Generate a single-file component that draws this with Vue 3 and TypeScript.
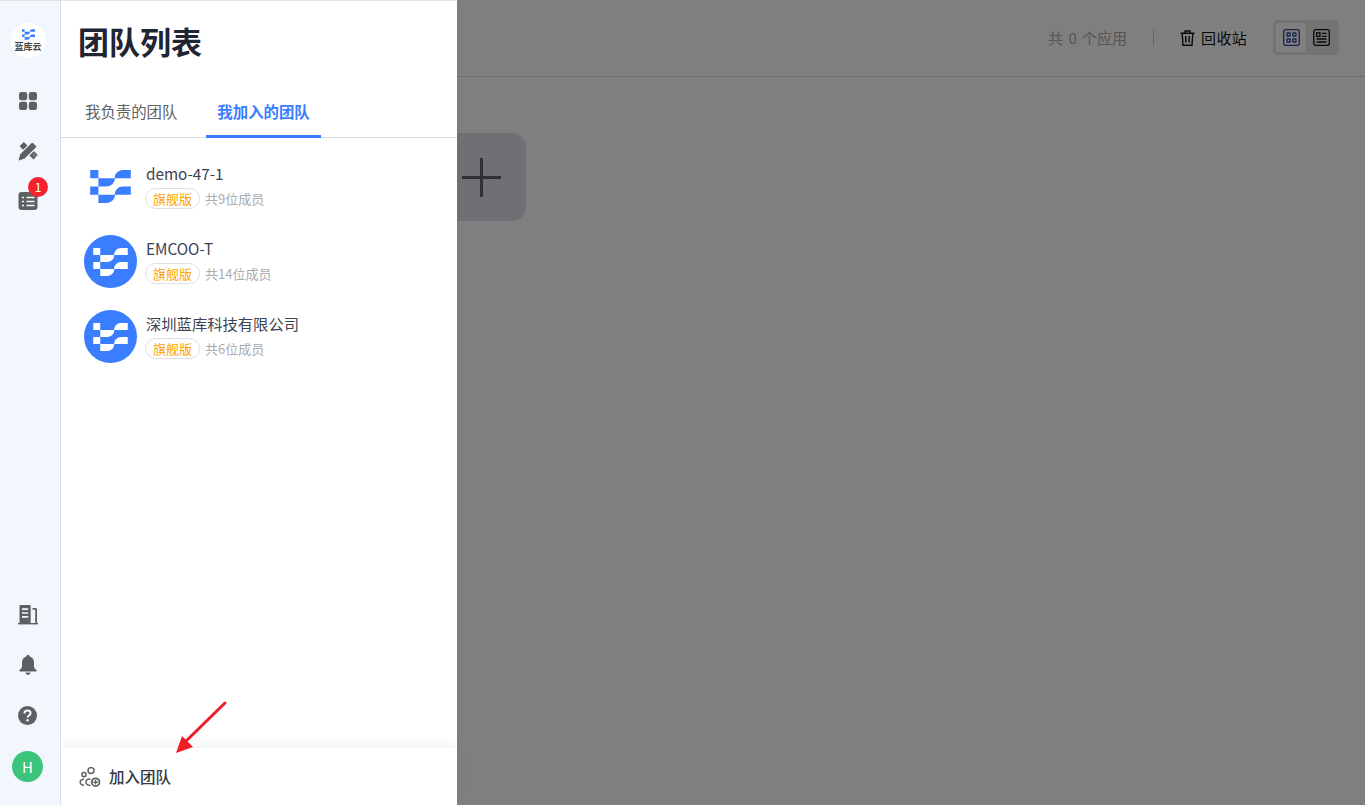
<template>
  <div class="page">
    <aside class="rail">
      <div class="rail__brand">
        <div class="brand-badge">
          <svg class="brand-badge__mark" viewBox="0 0 41 33.3"><path :d="logoPath" fill="#3a7dff" /></svg>
          <span class="brand-badge__text">蓝库云</span>
        </div>
      </div>
      <div class="rail__item">
        <svg width="18" height="18" viewBox="0 0 18 18" fill="#5f6062">
          <rect x="0" y="0" width="8.2" height="8.2" rx="2.2" />
          <rect x="9.8" y="0" width="8.2" height="8.2" rx="2.2" />
          <rect x="0" y="9.8" width="8.2" height="8.2" rx="2.2" />
          <rect x="9.8" y="9.8" width="8.2" height="8.2" rx="2.2" />
        </svg>
      </div>
      <div class="rail__item">
        <svg class="nudge" width="21" height="20" viewBox="0 0 21 20" fill="#5f6062">
          <path d="M2.6 4.2 L6.8 0 L13 6 L8.6 10.4 Z" />
          <path d="M10.8 12 L15.4 7.4 L20.8 13 L16.6 17.6 Z" />
          <path d="M14 .8 C14.8 0 15.8 0 16.6 .8 L19.2 3.4 C20 4.2 20 5.2 19.2 6 L8 17 L.8 19.6 L2.6 12 Z" stroke="#f2f6fd" stroke-width="1.1" />
          <path d="M17.6 12 L16.4 13.2 M19.6 14 L18.4 15.2" stroke="#f2f6fd" stroke-width="1" />
        </svg>
      </div>
      <div class="rail__item rail__item--badge">
        <svg width="20" height="18" viewBox="0 0 20 18">
          <rect x="0.5" y="0" width="19" height="18" rx="3" fill="#5f6062" />
          <path d="M4 5.5 H6 M8.5 5.5 H16.5 M4 9.5 H6 M8.5 9.5 H16.5 M4 13.5 H6 M8.5 13.5 H16.5" stroke="#f2f6fd" stroke-width="1.7" />
        </svg>
        <span class="badge">1</span>
      </div>

      <div class="rail__spacer"></div>

      <div class="rail__item">
        <svg width="20" height="20" viewBox="0 0 20 20" fill="#5f6062">
          <path d="M1.5 1 Q1.5 0 2.5 0 H11.5 Q12.7 0 12.7 1 V18 H1.5 Z" />
          <path d="M14.5 3 H17 Q19 3 19 4 V18 H17.2 V4.8 H14.5 Z" />
          <rect x="0" y="18" width="20" height="1.4" />
          <path d="M4 4.2 H10.2 M4 8 H10.2 M4 11.8 H10.2" stroke="#f2f6fd" stroke-width="1.7" />
        </svg>
      </div>
      <div class="rail__item">
        <svg width="18" height="20" viewBox="0 0 18 20" fill="#5f6062">
          <path d="M9 0 C10 0 10.7 .7 10.8 1.6 C13.6 2.4 15 4.8 15 7.6 V11.2 C15 12.8 16 13.8 17.4 15 C18 15.6 17.7 16.5 16.9 16.5 H1.1 C.3 16.5 0 15.6 .6 15 C2 13.8 3 12.8 3 11.2 V7.6 C3 4.8 4.4 2.4 7.2 1.6 C7.3 .7 8 0 9 0 Z" />
          <path d="M6.4 17.4 H11.6 C11.3 18.9 10.3 19.8 9 19.8 C7.7 19.8 6.7 18.9 6.4 17.4 Z" />
        </svg>
      </div>
      <div class="rail__item">
        <svg width="19" height="19" viewBox="0 0 19 19">
          <circle cx="9.5" cy="9.5" r="9.5" fill="#5f6062" />
          <path d="M6.4 7.4 C6.4 5.6 7.8 4.5 9.5 4.5 C11.3 4.5 12.6 5.6 12.6 7.2 C12.6 9.4 9.6 9.4 9.6 11.6" fill="none" stroke="#f2f6fd" stroke-width="2" />
          <circle cx="9.6" cy="14.2" r="1.2" fill="#f2f6fd" />
        </svg>
      </div>
      <div class="rail__item rail__item--last">
        <div class="user-avatar">H</div>
      </div>
    </aside>

    <main class="board">
      <header class="board__bar">
        <span class="board__count">共 0 个应用</span>
        <span class="board__divider"></span>
        <span class="board__trash">
          <svg width="15" height="16" viewBox="0 0 15 16" fill="none" stroke="#151515" stroke-width="1.4">
            <path d="M0.5 3.2 H14.5 M5 3 V1 H10 V3 M2.2 3.4 L3 15.2 H12 L12.8 3.4 M5.8 6 V12.4 M9.2 6 V12.4" />
          </svg>
          回收站
        </span>
        <div class="view-toggle">
          <span class="view-toggle__btn view-toggle__btn--on">
            <svg width="17" height="17" viewBox="0 0 17 17" fill="none" stroke="#2f4a9c" stroke-width="1.3">
              <rect x="0.7" y="0.7" width="15.6" height="15.6" rx="2" />
              <rect x="4" y="4" width="3.2" height="3" rx=".6" />
              <rect x="9.8" y="4" width="3.2" height="3" rx=".6" />
              <rect x="4" y="10" width="3.2" height="3" rx=".6" />
              <rect x="9.8" y="10" width="3.2" height="3" rx=".6" />
            </svg>
          </span>
          <span class="view-toggle__btn">
            <svg width="17" height="17" viewBox="0 0 17 17" fill="none" stroke="#151515" stroke-width="1.3">
              <rect x="0.7" y="0.7" width="15.6" height="15.6" rx="2" />
              <rect x="3.6" y="3.8" width="3.4" height="3.6" />
              <path d="M9 4.4 H13.6 M9 7.4 H13.6 M3.6 10 H13.6 M3.6 13 H13.6" />
            </svg>
          </span>
        </div>
      </header>
      <div class="board__content">
        <div class="add-card">
          <svg width="39" height="39" viewBox="0 0 39 39"><path d="M19.5 0 V39 M0 19.5 H39" stroke="#5e6066" stroke-width="3" /></svg>
        </div>
      </div>
    </main>

    <div class="mask"></div>

    <section class="drawer">
      <h1 class="drawer__title">团队列表</h1>
      <nav class="tabs">
        <span class="tabs__item">我负责的团队</span>
        <span class="tabs__item tabs__item--active">我加入的团队</span>
      </nav>
      <ul class="teams">
        <li v-for="team in teams" :key="team.name" class="team">
          <div class="team__logo" :class="{ 'team__logo--round': team.round }">
            <svg viewBox="0 0 41 33.3" :class="team.round ? 'mark-sm' : 'mark-lg'">
              <path :d="logoPath" :fill="team.round ? '#fff' : '#3a7dff'" />
            </svg>
          </div>
          <div class="team__info">
            <div class="team__name">{{ team.name }}</div>
            <div class="team__meta">
              <span class="tag">旗舰版</span>
              <span class="team__count">共{{ team.members }}位成员</span>
            </div>
          </div>
        </li>
      </ul>
      <footer class="drawer__foot">
        <svg width="22" height="20" viewBox="0 0 22 20" fill="none" stroke="#5f6062" stroke-width="1.5">
          <circle cx="12" cy="3.6" r="3" />
          <circle cx="5" cy="7.6" r="2.1" />
          <path d="M5 12.2 C3 12 1.2 13.4 1.2 15.2 C1.2 17 2.8 18.4 5 18.2 M11.4 12.2 C9 11.6 7 13.2 7 15.2 C7 17.2 9 18.8 11.4 18.2" />
          <circle cx="16.6" cy="15.2" r="3.9" stroke-width="1.8" />
          <path d="M16.6 13 V17.4 M14.4 15.2 H18.8" stroke-width="1.4" />
        </svg>
        <span class="drawer__join">加入团队</span>
      </footer>
    </section>

    <!-- 标注箭头 -->
    <svg class="pointer" width="60" height="60" viewBox="0 0 60 60">
      <path d="M54 5 L12 46" stroke="#ee1c25" stroke-width="3" stroke-linecap="round" />
      <path d="M5 55 L11 38 L22 49 Z" fill="#ee1c25" />
    </svg>
  </div>
</template>

<script setup lang="ts">
interface Team {
  name: string
  members: number
  round: boolean
}

// 两行相同的 S 形：左侧方块 + 下圆角块 + 上圆角块
const logoPath =
  'M0 0H8.3V8.3H0Z' +
  'M8.3 8.3H25A8.3 8.3 0 0 1 16.7 16.7H8.3Z' +
  'M24.6 8.4A8.3 8.3 0 0 1 33.3 0H41V8.3H25Z' +
  'M0 16.6H8.3V24.9H0Z' +
  'M8.3 24.9H25A8.3 8.3 0 0 1 16.7 33.3H8.3Z' +
  'M24.6 25A8.3 8.3 0 0 1 33.3 16.6H41V24.9H25Z'

const teams: Team[] = [
  { name: 'demo-47-1', members: 9, round: false },
  { name: 'EMCOO-T', members: 14, round: true },
  { name: '深圳蓝库科技有限公司', members: 6, round: true },
]
</script>

<style>
html,
body {
  margin: 0;
  height: 100%;
  overflow: hidden;
}
</style>

<style scoped>
.page {
  position: relative;
  display: flex;
  width: 100%;
  height: 805px;
  overflow: hidden;
  background: #fff;
  font-family: "Noto Sans CJK SC", "Liberation Sans", sans-serif;
}

.rail {
  position: relative;
  z-index: 3;
  display: flex;
  flex-direction: column;
  flex: none;
  box-sizing: border-box;
  width: 61px;
  height: 805px;
  padding: 0 5px 14px 0;
  border-top: 1px solid #e2e3e5;
  border-right: 1px solid #d9dde8;
  background: #f2f6fd;
}

.rail__brand {
  display: flex;
  justify-content: center;
  align-items: center;
  height: 75px;
}

.brand-badge {
  display: flex;
  flex-direction: column;
  align-items: center;
  justify-content: center;
  gap: 2px;
  width: 35px;
  height: 35px;
  margin: 3px 0 0 1px;
  border-radius: 50%;
  background: #fff;
}

.brand-badge__mark {
  width: 13px;
  height: 11px;
}

.brand-badge__text {
  font-size: 9px;
  line-height: 10px;
  font-weight: 700;
  color: #444;
}

.rail__item {
  position: relative;
  display: flex;
  align-items: center;
  justify-content: center;
  height: 50px;
}

.rail__item--last {
  margin-top: 1px;
}

.nudge {
  margin-top: 1px;
}

.rail__spacer {
  flex: 1;
}

.badge {
  position: absolute;
  top: 1px;
  left: 28px;
  width: 20px;
  height: 20px;
  border-radius: 50%;
  background: #f5222d;
  color: #fff;
  font-size: 12px;
  line-height: 20px;
  text-align: center;
}

.user-avatar {
  width: 31px;
  height: 31px;
  border-radius: 50%;
  background: #3cc47c;
  color: #fff;
  font-size: 15px;
  line-height: 31px;
  text-align: center;
}

.board {
  flex: 1;
  min-width: 0;
}

.board__bar {
  display: flex;
  align-items: center;
  justify-content: flex-end;
  box-sizing: border-box;
  height: 77px;
  padding: 0 26px 1px 0;
  border-bottom: 1px solid #dcdcdc;
  font-size: 15px;
}

.board__count {
  color: #a8a8a8;
  word-spacing: 2px;
}

.board__divider {
  width: 1px;
  height: 16px;
  margin: 0 26px;
  background: #c8c8c8;
}

.board__trash {
  display: flex;
  align-items: center;
  gap: 6px;
  color: #151515;
  letter-spacing: 0.3px;
}

.view-toggle {
  display: flex;
  margin-left: 26px;
  padding: 3px;
  border-radius: 5px;
  background: #e6e6e6;
}

.view-toggle__btn {
  display: flex;
  align-items: center;
  justify-content: center;
  width: 30px;
  height: 29px;
  border-radius: 4px;
}

.view-toggle__btn--on {
  background: #fff;
}

.board__content {
  padding: 56px 0 0 377px;
}

.add-card {
  display: flex;
  align-items: center;
  justify-content: center;
  box-sizing: border-box;
  width: 88px;
  height: 88px;
  padding-right: 2px;
  border-radius: 14px;
  background: #dfe1e6;
}

.mask {
  position: absolute;
  inset: 0;
  z-index: 1;
  background: rgba(0, 0, 0, 0.5);
}

.drawer {
  position: absolute;
  top: 0;
  left: 61px;
  bottom: 0;
  z-index: 2;
  display: flex;
  flex-direction: column;
  width: 396px;
  box-sizing: border-box;
  border-top: 1px solid #e2e3e5;
  background: #fff;
}

.drawer__title {
  margin: 0;
  padding: 17px 0 0 17px;
  font-size: 31px;
  line-height: 46px;
  font-weight: 700;
  color: #1f2533;
}

.tabs {
  display: flex;
  gap: 18px;
  height: 74px;
  box-sizing: border-box;
  padding: 34px 0 0 13px;
  border-bottom: 1px solid #d9dbe3;
}

.tabs__item {
  padding: 0 11px;
  font-size: 15.4px;
  line-height: 26px;
  color: #5f6368;
}

.tabs__item--active {
  height: 40px;
  box-sizing: border-box;
  border-bottom: 3px solid #3a7dff;
  color: #3a7dff;
  font-weight: 700;
}

.teams {
  flex: 1;
  margin: 0;
  padding: 11px 0 0 23px;
  list-style: none;
}

.team {
  display: flex;
  align-items: center;
  gap: 8px;
  height: 75px;
}

.team__logo {
  display: flex;
  align-items: center;
  justify-content: center;
  width: 53px;
  height: 53px;
}

.team__logo--round {
  border-radius: 50%;
  background: #3a7dff;
}

.mark-lg {
  width: 41px;
  height: 33px;
}

.mark-sm {
  width: 35px;
  height: 28px;
}

.team__info {
  padding-bottom: 2px;
}

.team__name {
  padding-left: 1px;
  font-size: 15.3px;
  line-height: 22px;
  color: #3d4250;
}

.team__meta {
  display: flex;
  align-items: center;
  gap: 5px;
  margin-top: 4px;
}

.tag {
  box-sizing: border-box;
  width: 55px;
  height: 21px;
  border: 1px solid #dddfe5;
  border-radius: 11px;
  font-size: 13px;
  line-height: 19px;
  text-align: center;
  color: #ff9f0a;
}

.team__count {
  font-size: 13px;
  color: #a9abb0;
}

.drawer__foot {
  display: flex;
  align-items: center;
  gap: 8px;
  height: 57px;
  padding-left: 18px;
  box-shadow: 0 -4px 12px rgba(0, 0, 0, 0.05);
  font-size: 15.5px;
  font-weight: 500;
  color: #333844;
}

.drawer__join {
  margin-top: -2px;
}

.pointer {
  position: absolute;
  left: 171px;
  top: 698px;
  z-index: 4;
}
</style>
